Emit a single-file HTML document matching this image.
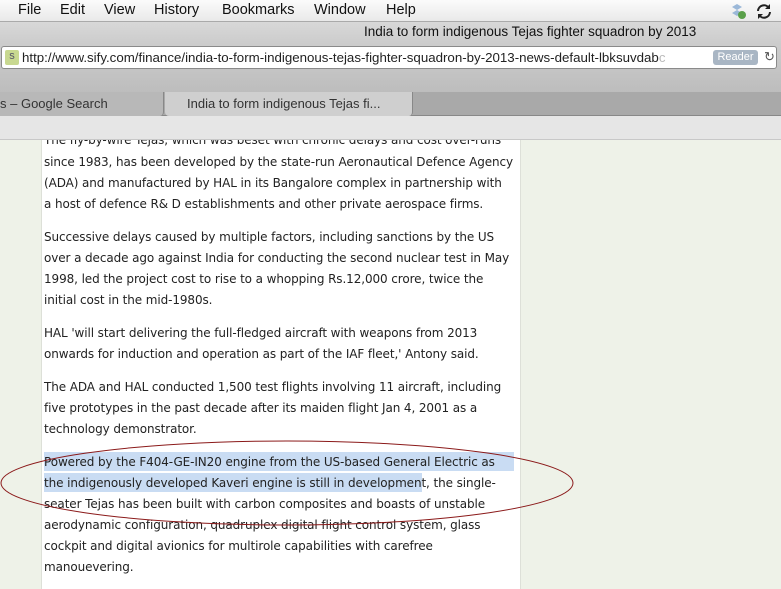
<!DOCTYPE html>
<html><head><meta charset="utf-8"><style>
*{margin:0;padding:0;box-sizing:border-box}
body{width:781px;height:589px;overflow:hidden;background:#eef2e8;position:relative;font-family:"Liberation Sans",sans-serif}
.abs{position:absolute}
#menu{left:0;top:0;width:781px;height:22px;background:linear-gradient(#fbfbfb,#e9e9e9);border-bottom:1px solid #aaa;font-size:14.5px;color:#111}
#menu span{position:absolute;top:2px}
#title{left:0;top:22px;width:781px;height:20px;background:linear-gradient(#d8d8d8,#cdcdcd)}
#tool{left:0;top:42px;width:781px;height:50px;background:linear-gradient(#cdcdcd,#bdbdbd)}
#url{left:1px;top:46px;width:776px;height:23px;background:#fff;border:1px solid #8a8a8a;border-radius:3px;font-size:13.3px;color:#222;white-space:nowrap;overflow:hidden}
#tabs{left:0;top:92px;width:781px;height:24px;background:#a9a9a9;border-bottom:1px solid #888}
#bar{left:0;top:116px;width:781px;height:24px;background:#e6e6e6;border-bottom:1px solid #c8c8c8}
#content{left:41px;top:140px;width:480px;height:449px;background:#fff;border-left:1px solid #dde0d8;border-right:1px solid #dde0d8}
.l{position:absolute;left:44px;font-family:"DejaVu Sans",Verdana,sans-serif;font-size:12px;color:#222;white-space:nowrap;letter-spacing:-0.1px}
</style></head><body>
<div id="menu" class="abs">
<span style="left:18px">File</span><span style="left:60px">Edit</span><span style="left:104px">View</span><span style="left:154px">History</span><span style="left:222px">Bookmarks</span><span style="left:314px">Window</span><span style="left:386px">Help</span>
<svg class="abs" style="left:729px;top:3px" width="18" height="17"><path d="M3 4l5-3 5 3-5 3zM3 10l5-3 5 3-5 3z" fill="#9bb8d8"/><circle cx="13" cy="12" r="4" fill="#5aa04a"/></svg>
<svg class="abs" style="left:755px;top:3px" width="18" height="17"><path d="M3 8a6 6 0 0 1 11-3M15 9a6 6 0 0 1-11 3" stroke="#222" stroke-width="2" fill="none"/><path d="M15 1v5h-5zM3 16v-5h5z" fill="#222"/></svg>
</div>
<div id="title" class="abs"><span class="abs" style="left:364px;top:2px;font-size:13.5px;color:#111">India to form indigenous Tejas fighter squadron by 2013</span></div>
<div id="tool" class="abs"></div>
<div id="url" class="abs">
<span class="abs" style="left:3px;top:3px;width:14px;height:15px;background:#c8d890;border-radius:2px;font-size:11px;color:#556;text-align:center">s</span>
<span class="abs" style="left:20px;top:3px">http://www.sify.com/finance/india-to-form-indigenous-tejas-fighter-squadron-by-2013-news-default-lbksuvdab<span style="color:#bbb">c</span></span>
<span class="abs" style="left:711px;top:3px;width:45px;height:15px;background:#a9b6c4;border-radius:3px;color:#fff;font-size:11px;text-align:center;line-height:15px">Reader</span>
<span class="abs" style="left:762px;top:2px;color:#555;font-size:13px">↻</span>
</div>
<div id="tabs" class="abs">
<div class="abs" style="left:0;top:0;width:164px;height:24px;background:#b8b8b8;border-right:1px solid #888;border-radius:0 0 4px 0"></div>
<span class="abs" style="left:0;top:4px;font-size:13px;color:#333">s – Google Search</span>
<div class="abs" style="left:165px;top:0;width:248px;height:24px;background:#cfcfcf;border-right:1px solid #888;border-radius:0 0 4px 4px"></div>
<span class="abs" style="left:187px;top:4px;font-size:13px;color:#333">India to form indigenous Tejas fi...</span>
</div>
<div id="bar" class="abs"></div>
<div id="content" class="abs"></div>
<div class="l" style="top:133px;clip-path:inset(7px 0 0 0)">The fly-by-wire Tejas, which was beset with chronic delays and cost over-runs</div>
<div class="l" style="top:155px">since 1983, has been developed by the state-run Aeronautical Defence Agency</div>
<div class="l" style="top:176px">(ADA) and manufactured by HAL in its Bangalore complex in partnership with</div>
<div class="l" style="top:197px">a host of defence R&amp; D establishments and other private aerospace firms.</div>
<div class="l" style="top:230px">Successive delays caused by multiple factors, including sanctions by the US</div>
<div class="l" style="top:251px">over a decade ago against India for conducting the second nuclear test in May</div>
<div class="l" style="top:272px">1998, led the project cost to rise to a whopping Rs.12,000 crore, twice the</div>
<div class="l" style="top:293px">initial cost in the mid-1980s.</div>
<div class="l" style="top:326px">HAL 'will start delivering the full-fledged aircraft with weapons from 2013</div>
<div class="l" style="top:347px">onwards for induction and operation as part of the IAF fleet,' Antony said.</div>
<div class="l" style="top:380px">The ADA and HAL conducted 1,500 test flights involving 11 aircraft, including</div>
<div class="l" style="top:401px">five prototypes in the past decade after its maiden flight Jan 4, 2001 as a</div>
<div class="l" style="top:422px">technology demonstrator.</div>
<div class="abs" style="left:44px;top:452px;width:470px;height:19px;background:#c9dcf3"></div>
<div class="abs" style="left:44px;top:473px;width:378px;height:19px;background:#c9dcf3"></div>
<div class="l" style="top:455px">Powered by the F404-GE-IN20 engine from the US-based General Electric as</div>
<div class="l" style="top:476px">the indigenously developed Kaveri engine is still in development, the single-</div>
<div class="l" style="top:497px">seater Tejas has been built with carbon composites and boasts of unstable</div>
<div class="l" style="top:518px">aerodynamic configuration, quadruplex digital flight control system, glass</div>
<div class="l" style="top:539px">cockpit and digital avionics for multirole capabilities with carefree</div>
<div class="l" style="top:560px">manouevering.</div>
<svg class="abs" style="left:0;top:440px" width="600" height="100"><ellipse cx="287" cy="43" rx="286" ry="42" fill="none" stroke="#8b1a1a" stroke-width="1"/></svg>
</body></html>
